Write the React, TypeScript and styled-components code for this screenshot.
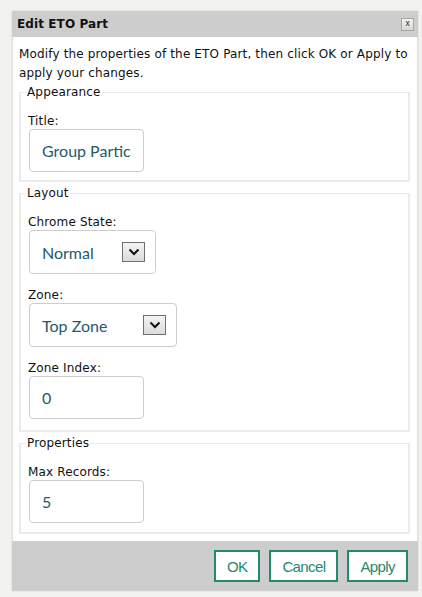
import React, { useState } from 'react';
import styled, { createGlobalStyle } from 'styled-components';

const GlobalStyle = createGlobalStyle`
  html, body {
    margin: 0;
    padding: 0;
    background: #f2f2f0;
  }
  body {
    font-family: "DejaVu Sans", Verdana, sans-serif;
    font-size: 12px;
    color: #111;
  }
`;

const Page = styled.div`
  padding: 11px 4px 5px 12px;
`;

const Dialog = styled.div`
  width: 406px;
  background: #fff;
  box-shadow: 0 0 2px rgba(0, 0, 0, 0.12);
`;

const Header = styled.div`
  height: 26px;
  display: flex;
  align-items: center;
  justify-content: space-between;
  padding: 0 4px 0 5px;
  background: #cdcdcd;
  font-weight: bold;
  font-size: 12px;
  letter-spacing: 0.1px;
`;

const CloseButton = styled.button`
  width: 13px;
  height: 13px;
  padding: 0;
  border: 1px solid #a8a8a0;
  background: linear-gradient(#f4f4f0, #d8d8d2);
  font-family: "DejaVu Sans", sans-serif;
  font-size: 8px;
  line-height: 10px;
  color: #333;
  cursor: pointer;
`;

const Body = styled.div`
  padding: 8px 7px 7px 6px;
  border-left: 1px solid #e2e2e2;
  border-right: 1px solid #e2e2e2;
`;

const Intro = styled.p`
  margin: 0 0 2px;
  line-height: 19px;
  letter-spacing: 0.15px;
`;

const Group = styled.fieldset<{ $padBottom: number }>`
  margin: 0 0 4px 0;
  padding: 15px 8px ${(p) => p.$padBottom}px 7px;
  border: 2px solid #ebebeb;
  border-width: 1px 2px 2px 2px;

  &:last-child {
    margin-bottom: 0;
  }
`;

const Legend = styled.legend`
  padding: 0 1px;
  margin-left: -2px;
  font-size: 12px;
  letter-spacing: 0.15px;
`;

const Field = styled.div`
  display: flex;
  flex-direction: column;
  align-items: flex-start;
  & + & {
    margin-top: 14px;
  }
`;

const Label = styled.label`
  margin: 0 0 1px 0;
  line-height: 14px;
  letter-spacing: 0.15px;
`;

const Box = styled.div<{ $width: number; $height: number }>`
  box-sizing: border-box;
  width: ${(p) => p.$width}px;
  height: ${(p) => p.$height}px;
  margin-left: 1px;
  display: flex;
  align-items: center;
  justify-content: space-between;
  padding: 0 10px 0 12px;
  border: 1px solid #cdcdcd;
  border-radius: 4px;
  background: #fff;
  font-family: Lato, "Open Sans", sans-serif;
  font-size: 16px;
  color: #24596a;
  white-space: nowrap;
  overflow: hidden;
`;

const DropArrow = styled.span`
  box-sizing: border-box;
  width: 23px;
  height: 20px;
  display: flex;
  align-items: center;
  justify-content: center;
  border: 1px solid #6f6f6f;
  background: linear-gradient(#f3f3f3, #dcdcdc);
`;

const Footer = styled.div`
  height: 50px;
  display: flex;
  align-items: center;
  justify-content: flex-end;
  gap: 9px;
  padding-right: 10px;
  background: #cdcdcd;
`;

const ActionButton = styled.button`
  height: 32px;
  padding: 0 11px;
  border: 2px solid #23896f;
  background: #fff;
  color: #23896f;
  font-family: "Liberation Sans", Arial, sans-serif;
  font-size: 15px;
  letter-spacing: -0.6px;
  cursor: pointer;
`;

const Chevron = () => (
  <svg width="12" height="8" viewBox="0 0 12 8">
    <path d="M1.5 1.5 L6 6 L10.5 1.5" fill="none" stroke="#111" strokeWidth="2" />
  </svg>
);

const Select = ({ value, width }: { value: string; width: number }) => (
  <Box $width={width} $height={44}>
    <span>{value}</span>
    <DropArrow>
      <Chevron />
    </DropArrow>
  </Box>
);

const App = () => {
  const [chrome] = useState('Normal');
  const [zone] = useState('Top Zone');

  return (
    <>
      <GlobalStyle />
      <Page>
        <Dialog>
          <Header>
            <span>Edit ETO Part</span>
            <CloseButton aria-label="Close">x</CloseButton>
          </Header>
          <Body>
            <Intro>Modify the properties of the ETO Part, then click OK or Apply to apply your changes.</Intro>

            <Group $padBottom={8}>
              <Legend>Appearance</Legend>
              <Field>
                <Label>Title:</Label>
                <Box $width={115} $height={43}>Group Partic</Box>
              </Field>
            </Group>

            <Group $padBottom={11}>
              <Legend>Layout</Legend>
              <Field>
                <Label>Chrome State:</Label>
                <Select value={chrome} width={127} />
              </Field>
              <Field>
                <Label>Zone:</Label>
                <Select value={zone} width={148} />
              </Field>
              <Field>
                <Label>Zone Index:</Label>
                <Box $width={115} $height={43}>0</Box>
              </Field>
            </Group>

            <Group $padBottom={9}>
              <Legend>Properties</Legend>
              <Field>
                <Label>Max Records:</Label>
                <Box $width={115} $height={43}>5</Box>
              </Field>
            </Group>
          </Body>
          <Footer>
            <ActionButton>OK</ActionButton>
            <ActionButton>Cancel</ActionButton>
            <ActionButton>Apply</ActionButton>
          </Footer>
        </Dialog>
      </Page>
    </>
  );
};

export default App;
